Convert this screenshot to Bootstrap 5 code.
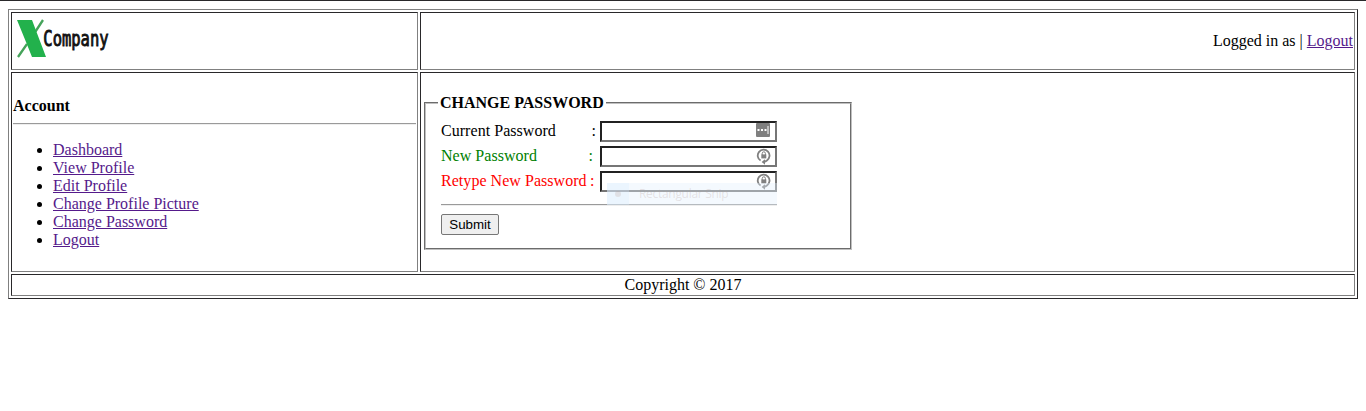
<!DOCTYPE html>
<html lang="en">
<head>
<meta charset="utf-8">
<meta name="viewport" content="width=device-width, initial-scale=1">
<title>XCompany - Change Password</title>
<link rel="stylesheet" href="https://cdn.jsdelivr.net/npm/bootstrap@5.3.0/dist/css/bootstrap.min.css">
<script src="https://cdn.jsdelivr.net/npm/bootstrap@5.3.0/dist/js/bootstrap.bundle.min.js" defer></script>
<style>
body{font:16px/18px "Liberation Serif","Times New Roman",serif;color:#000;background:#fff;border-top:1px solid #29282a;min-height:411px}
a,a:hover{color:#551a8b;text-decoration:underline}
.frame{display:grid;grid-template-columns:407px 1fr;grid-template-rows:58px 200px 22px;gap:2px;margin:8px 8px 0;padding:2px;border:1px solid;border-color:#808080 #29282a #29282a #808080}
.cell{border:1px solid;border-color:#29282a #808080 #808080 #29282a;padding:1px;min-width:0}
.copyright{grid-column:1/3}
.rule{height:2px;border-top:1px solid #9a9a9a;border-bottom:1px solid #eee}
.side-title{padding-top:23px;height:49px;font-size:16px}
.links{padding-left:40px;margin:16px 0 0}
.pw{width:428px;height:156px;margin:20px 0 0 2px;padding:0 15px;border:2px groove #c0c0c0}
.pw legend{float:none;width:auto;font:bold 16px/18px "Liberation Serif",serif;padding:0 2px;margin:0 0 0 -3px}
.rows{padding-top:9px}
.line{height:21px;margin-bottom:4px}
.lab{width:159px;white-space:pre;padding-top:1px;letter-spacing:.04px}
.colon{margin-right:4px}
.new .colon{margin-right:7px}
.again .colon{margin-right:5.5px}
.new{color:green}
.again{color:red}
.field{width:177px;height:21px;border:2px solid;border-color:#212121 #767676 #767676 #212121;background:#fff}
.field input{width:145px;height:17px;border:0;padding:1px 2px;outline:0;background:transparent}
.field svg{display:block}
.form-rule{width:336px;margin:12px 0 8px}
.send{width:58px;height:21px;padding:0;border:1px solid #767676;border-radius:2px;background:#efefef;color:#000;font:13.333px/18px "Liberation Sans",Arial,sans-serif}
.snip{left:607px;top:183px;width:170px;height:22px;background:rgba(225,240,253,.38);font:12px/22px "Open Sans","Noto Sans",sans-serif;letter-spacing:-.3px;color:rgba(180,160,155,.27);pointer-events:none}
.snip-dot{width:22px;height:22px;margin-right:10px;background:rgba(215,235,255,.3)}
.snip-dot i{width:6px;height:6px;border-radius:50%;background:rgba(180,150,140,.22)}
</style>
</head>
<body>
<main class="frame">
  <header class="cell">
    <svg class="d-block overflow-visible" width="120" height="54" viewBox="0 0 120 54" role="img" aria-label="XCompany">
      <path d="M30 6 22.500 17.500M14 30 5 43" stroke="#45a35a" stroke-width="2.300" fill="none"/>
      <path d="M4 6h15l14 37H19L13 28Z" fill="#22b14c"/>
      <text transform="translate(30.300 32) scale(.775 1.030)" font-family="DejaVu Sans Mono, monospace" font-size="20" fill="#111" stroke="#111" stroke-width=".9">Company</text>
    </svg>
  </header>
  <div class="cell d-flex align-items-center justify-content-end"><span>Logged in as | <a href="#">Logout</a></span></div>
  <nav class="cell">
    <div class="side-title fw-bold">Account</div>
    <div class="rule"></div>
    <ul class="links">
      <li><a href="#">Dashboard</a></li>
      <li><a href="#">View Profile</a></li>
      <li><a href="#">Edit Profile</a></li>
      <li><a href="#">Change Profile Picture</a></li>
      <li><a href="#">Change Password</a></li>
      <li><a href="#">Logout</a></li>
    </ul>
  </nav>
  <section class="cell">
    <fieldset class="pw">
      <legend>CHANGE PASSWORD</legend>
      <div class="rows">
        <div class="line d-flex"><label class="lab d-flex" for="cur">Current Password<span class="colon ms-auto">:</span></label>
          <div class="field d-flex"><input id="cur" type="password">
            <svg width="28" height="17"><rect x="9" y="0" width="14" height="14" rx="1" fill="#7f7f7f"/><path d="M10.500 6h2v2h-2zM14 6h2v2h-2zM17.500 6h2v2h-2zM20.500 3h1v8h-1z" fill="#fff"/></svg></div></div>
        <div class="line d-flex"><label class="lab new d-flex" for="new">New Password<span class="colon ms-auto">:</span></label>
          <div class="field d-flex"><input id="new" type="password">
            <svg width="28" height="17"><g id="lock"><path d="M13.600 12.600A5.900 5.900 0 1 1 20 12.400Q18.800 13.700 16.800 13.900" fill="none" stroke="#808080" stroke-width="1.800"/><path d="m18 11.200-3.400 2.700 3.400 2.900Z" fill="#808080"/><path d="M15.200 7V5.400a1.600 1.600 0 0 1 3.200 0V7" fill="none" stroke="#808080" stroke-width="1"/><rect x="14.300" y="6.400" width="5" height="4" fill="#808080"/></g></svg></div></div>
        <div class="line d-flex"><label class="lab again d-flex" for="again">Retype New Password<span class="colon ms-auto">:</span></label>
          <div class="field d-flex"><input id="again" type="password">
            <svg width="28" height="17"><use href="#lock"/></svg></div></div>
      </div>
      <div class="rule form-rule"></div>
      <button class="send d-block" type="button">Submit</button>
    </fieldset>
  </section>
  <footer class="cell copyright text-center">Copyright © 2017</footer>
</main>
<div class="snip position-absolute d-flex"><span class="snip-dot d-flex align-items-center justify-content-center"><i></i></span><span>Rectangular Snip</span></div>
</body>
</html>
